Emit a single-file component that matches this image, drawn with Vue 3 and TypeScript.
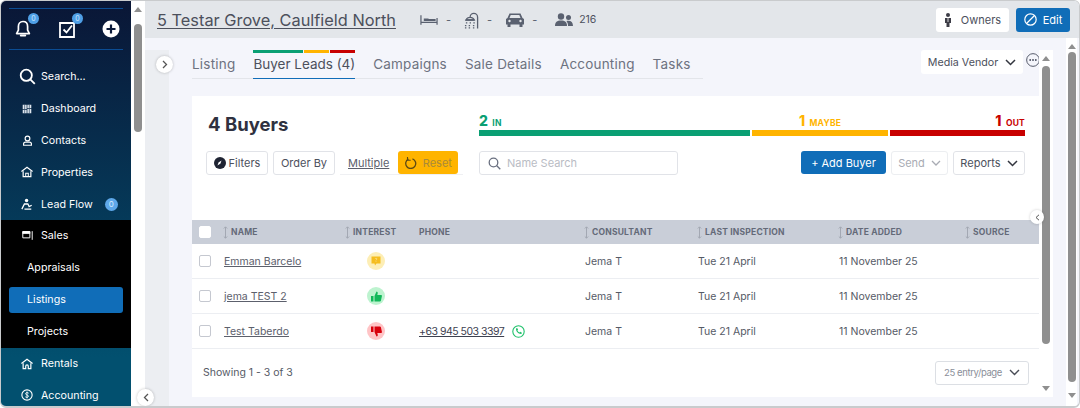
<template>
  <div class="window">
    <aside class="sidebar">
      <div class="quick">
        <span class="quick-icon">
          <svg width="18" height="20" viewBox="0 0 18 20"><path d="M9 2.500c-3 0-4.600 2.200-4.600 5v3.600L2.600 14.600h12.800l-1.800-3.500V7.500c0-2.800-1.600-5-4.600-5z" fill="none" stroke="#fff" stroke-width="1.700" stroke-linejoin="round"/><path d="M6.800 16.500h4.400" stroke="#fff" stroke-width="2" stroke-linecap="round"/></svg>
          <b class="dot">0</b>
        </span>
        <span class="quick-icon">
          <svg width="18" height="20" viewBox="0 0 18 20"><path d="M2 4h14v14H2z" fill="none" stroke="#fff" stroke-width="1.800"/><path d="M5.500 10.500l3 3 5.500-7" fill="none" stroke="#fff" stroke-width="1.800"/></svg>
          <b class="dot">0</b>
        </span>
        <svg width="18" height="18" viewBox="0 0 18 18"><circle cx="9" cy="9" r="8.500" fill="#fff"/><path d="M9 4.500v9M4.500 9h9" stroke="#0b1a3a" stroke-width="2.200"/></svg>
      </div>
      <nav class="nav">
        <a v-for="item in topNav" :key="item.label" class="nav-row">
          <span class="nav-icon" v-html="item.icon"></span>
          <span>{{ item.label }}</span>
          <b v-if="item.badge !== undefined" class="nav-badge">{{ item.badge }}</b>
        </a>
        <div class="sales">
          <a class="nav-row">
            <span class="nav-icon" v-html="salesIcon"></span>
            <span>Sales</span>
          </a>
          <a v-for="sub in salesNav" :key="sub" class="sub-row" :class="{ active: sub === 'Listings' }">{{ sub }}</a>
        </div>
        <a v-for="item in bottomNav" :key="item.label" class="nav-row">
          <span class="nav-icon" v-html="item.icon"></span>
          <span>{{ item.label }}</span>
        </a>
      </nav>
    </aside>
    <div class="side-scroll">
      <span class="arrow-up"></span>
      <span class="thumb"></span>
    </div>

    <main class="main">
      <header class="topbar">
        <a class="address">5 Testar Grove, Caulfield North</a>
        <div class="facts">
          <svg width="18" height="12" viewBox="0 0 19 12"><path d="M1 1v10M18 4v7M1 8.500h17" stroke="#5a6170" stroke-width="1.300" fill="none"/><path d="M4 7V4.500h5V7zM9 7V5h7.500v2" fill="#5a6170"/></svg>
          <i>-</i>
          <svg width="15" height="18" viewBox="0 0 16 18"><path d="M14.500 18V6a4 4 0 0 0-8 0M2 9a5 5 0 0 1 9 0z" fill="none" stroke="#5a6170" stroke-width="1.400"/><path d="M2 9h9" stroke="#5a6170" stroke-width="1.400"/><path d="M2 12h1.500M6 12h1.500M10 12h1.500M1 15h1.500M5 15h1.500M9.500 15H11M1 17.500h1.500M5 17.500h1.500M9.500 17.500H11" stroke="#5a6170" stroke-width="1.300"/></svg>
          <i>-</i>
          <svg class="car" width="18" height="15" viewBox="0 0 18 15"><path d="M3.500 1.500h11L16.500 6l1.500 1v5.500h-1.500V15h-3v-2.500h-9V15h-3v-2.500H0V7l1.500-1z" fill="#5a6170"/><path d="M4.700 3h8.600l1.200 3h-11z" fill="#e3e6ea"/><circle cx="3.500" cy="9" r="1.200" fill="#e3e6ea"/><circle cx="14.500" cy="9" r="1.200" fill="#e3e6ea"/></svg>
          <i>-</i>
          <svg class="people" width="18" height="13" viewBox="0 0 18 13"><circle cx="6" cy="3.500" r="3.200" fill="#5a6170"/><circle cx="13.500" cy="4.500" r="2.500" fill="#5a6170"/><path d="M0 13c0-4 2-5.500 6-5.500s6 1.500 6 5.500z" fill="#5a6170"/><path d="M13 13c0-2-.5-3.500-1.500-5 4-.8 6.500.8 6.500 5z" fill="#5a6170"/></svg>
          <span class="count">216</span>
        </div>
        <div class="top-actions">
          <button class="owners">
            <svg width="8" height="14" viewBox="0 0 8 14"><circle cx="4" cy="2" r="2" fill="#3c3c46"/><path d="M1 5h6v5H5.500v4h-3v-4H1z" fill="#3c3c46"/><path d="M4 5v4" stroke="#fff" stroke-width=".8"/></svg>
            Owners
          </button>
          <button class="edit">
            <svg width="13" height="13" viewBox="0 0 13 13"><circle cx="6.500" cy="6.500" r="5.700" fill="none" stroke="#fff" stroke-width="1.200"/><path d="M3 10l7-7" stroke="#fff" stroke-width="1.200"/></svg>
            Edit
          </button>
        </div>
      </header>

      <div class="content">
        <div class="pane">
          <div class="tab-row">
            <div class="tabs">
              <a v-for="tab in tabs" :key="tab" class="tab" :class="{ current: tab === 'Buyer Leads (4)' }">
                <span v-if="tab === 'Buyer Leads (4)'" class="tab-bar"><i class="in"></i><i class="maybe"></i><i class="out"></i></span>
                {{ tab }}
              </a>
            </div>
            <div class="vendor-tools">
              <div class="vendor">Media Vendor <svg class="chev" width="11" height="7" viewBox="0 0 11 7"><path d="M1 1l4.500 4.500L10 1" fill="none" stroke="#33363f" stroke-width="1.500"/></svg></div>
              <svg width="14" height="14" viewBox="0 0 15 15"><circle cx="7.500" cy="7.500" r="6.800" fill="none" stroke="#4a5060" stroke-width="1"/><circle cx="4.500" cy="7.500" r="1" fill="#4a5060"/><circle cx="7.500" cy="7.500" r="1" fill="#4a5060"/><circle cx="10.500" cy="7.500" r="1" fill="#4a5060"/></svg>
            </div>
          </div>

          <section class="card">
            <div class="summary">
              <h1>4 Buyers</h1>
              <div class="meter">
                <div class="seg seg-in"><span class="seg-label"><b>2</b> IN</span><i></i></div>
                <div class="seg seg-maybe"><span class="seg-label"><b>1</b> MAYBE</span><i></i></div>
                <div class="seg seg-out"><span class="seg-label"><b>1</b> OUT</span><i></i></div>
              </div>
            </div>

            <div class="controls">
              <div class="left-controls">
                <button class="btn filters">
                  <svg width="12" height="12" viewBox="0 0 12 12"><circle cx="6" cy="6" r="6" fill="#1f2433"/><path d="M3.500 8.500l1-3 3-2-1 3z" fill="#fff"/></svg>
                  Filters
                </button>
                <button class="btn order">Order By</button>
                <div class="multi">
                  <a>Multiple</a>
                  <button class="reset">
                    <svg width="12" height="13" viewBox="0 0 12 13"><path d="M7.500 2.800A5 5 0 1 1 3.500 3" fill="none" stroke="#5c4a14" stroke-width="1.300"/><path d="M2.500 1v3.200h3.200" fill="none" stroke="#5c4a14" stroke-width="1.100"/></svg>
                    Reset
                  </button>
                </div>
              </div>
              <div class="search-box">
                <svg width="13" height="13" viewBox="0 0 13 13"><circle cx="5.500" cy="5.500" r="4.300" fill="none" stroke="#6a7080" stroke-width="1.300"/><path d="M8.800 8.800l3.500 3.500" stroke="#6a7080" stroke-width="1.300"/></svg>
                <span>Name Search</span>
              </div>
              <div class="right-controls">
                <button class="add">+ Add Buyer</button>
                <button class="btn send">Send <svg width="10" height="6" viewBox="0 0 10 6"><path d="M1 1l4 4 4-4" fill="none" stroke="#a8abb3" stroke-width="1.300"/></svg></button>
                <button class="btn reports">Reports <svg class="chev" width="11" height="7" viewBox="0 0 11 7"><path d="M1 1l4.500 4.500L10 1" fill="none" stroke="#33363f" stroke-width="1.500"/></svg></button>
              </div>
            </div>

            <div class="grid-wrap">
              <span class="grid-handle"><svg width="5" height="7" viewBox="0 0 5 7"><path d="M4 .8L1 3.500 4 6.200" fill="none" stroke="#555" stroke-width="1"/></svg></span>
              <div class="grid head">
                <span class="cell-check"><i class="box head-box"></i></span>
                <span v-for="col in columns" :key="col.label" class="head-cell" :class="{ nosort: !col.sort }">
                  <svg v-if="col.sort" width="5" height="13" viewBox="0 0 5 13"><path d="M2.500 1v11M.8 2.500L2.500 .8 4.200 2.500M.8 10.500l1.700 1.700 1.700-1.700" stroke="#a3a8b3" stroke-width="1" fill="none"/></svg>
                  {{ col.label }}
                </span>
              </div>
              <div v-for="row in buyers" :key="row.name" class="grid row">
                <span class="cell-check"><i class="box"></i></span>
                <a class="link">{{ row.name }}</a>
                <span class="interest" :class="row.interest" v-html="interestIcons[row.interest]"></span>
                <span class="phone">
                  <a v-if="row.phone" class="link phone-link">{{ row.phone }}</a>
                  <svg v-if="row.phone" width="13" height="13" viewBox="0 0 13 13"><circle cx="6.500" cy="6.500" r="5.700" fill="none" stroke="#1fc16b" stroke-width="1.100"/><path d="M4 3.500l1.200-.5.900 1.700-.7.700c.4.900 1.200 1.700 2.100 2.100l.7-.7 1.700.9-.5 1.200c-2.800.3-5.700-2.600-5.400-5.400z" fill="#1fc16b"/></svg>
                </span>
                <span>{{ row.consultant }}</span>
                <span>{{ row.inspection }}</span>
                <span>{{ row.added }}</span>
                <span></span>
              </div>
            </div>

            <div class="foot">
              <span>Showing 1 - 3 of 3</span>
              <div class="per-page">25 entry/page <svg class="chev" width="11" height="7" viewBox="0 0 11 7"><path d="M1 1l4.500 4.500L10 1" fill="none" stroke="#4a4d57" stroke-width="1.400"/></svg></div>
            </div>
          </section>
        </div>

        <div class="inner-scroll">
          <span class="arrow-up"></span>
          <span class="thumb"></span>
          <span class="arrow-down"></span>
        </div>
        <div class="outer-scroll">
          <span class="arrow-up"></span>
          <span class="thumb"></span>
          <span class="arrow-down"></span>
        </div>

        <span class="float-btn expand"><svg width="6" height="9" viewBox="0 0 6 9"><path d="M1 1l3.500 3.500L1 8" fill="none" stroke="#555" stroke-width="1.300"/></svg></span>
        <span class="float-btn collapse"><svg width="6" height="9" viewBox="0 0 6 9"><path d="M5 1L1.500 4.500 5 8" fill="none" stroke="#555" stroke-width="1.300"/></svg></span>
      </div>
    </main>
  </div>
</template>

<script setup lang="ts">
interface NavItem {
  label: string;
  icon: string;
  badge?: number;
}

interface Buyer {
  name: string;
  interest: "maybe" | "in" | "out";
  phone: string;
  consultant: string;
  inspection: string;
  added: string;
}

const svg = (w: number, body: string) =>
  `<svg width="${w}" height="${w}" viewBox="0 0 14 14" fill="none" stroke="#fff">${body}</svg>`;

const topNav: NavItem[] = [
  { label: "Search...", icon: svg(17, '<circle cx="6" cy="6" r="4.600" stroke-width="1.500"/><path d="M9.500 9.500L13 13" stroke-width="1.500"/>') },
  { label: "Dashboard", icon: svg(10, '<path d="M1 1h5.500v6.500H1zM7.500 1H13v4.500H7.500zM1 8.500h5.500V13H1zM7.500 6.500H13V13H7.500z" fill="#dfe6ee" stroke="none"/><path d="M3.700 1v6.500M10.300 1v4.500M3.700 8.500V13M10.300 6.500V13" stroke="#0b2a4a" stroke-width=".8"/>') },
  { label: "Contacts", icon: svg(11, '<circle cx="7" cy="4.500" r="3" stroke-width="1.500"/><path d="M2 13v-1.500c0-1.500 1-2.500 2.500-2.500h5c1.500 0 2.500 1 2.500 2.500V13z" stroke-width="1.500"/>') },
  { label: "Properties", icon: svg(12, '<path d="M.5 6.500L7 1.500l6.500 5" stroke-width="1.400"/><path d="M2.500 6v6.500h9V6" stroke-width="1.400"/><path d="M5.500 12.500V8.500h3v4" stroke-width="1.200"/>') },
  { label: "Lead Flow", badge: 0, icon: svg(12, '<circle cx="6.500" cy="3" r="2" fill="#fff" stroke="none"/><path d="M1 13l3-6h4l1.500 3 3-1.500M4 13h8" stroke-width="1.500"/>') },
];

const salesIcon = svg(11, '<path d="M1 2h9v8H1z" stroke-width="1.200"/><path d="M1 2h9v2.500H1z" fill="#fff"/><path d="M13 1.500v11" stroke-width="1.200"/>');

const salesNav = ["Appraisals", "Listings", "Projects"];

const bottomNav: NavItem[] = [
  { label: "Rentals", icon: svg(12, '<path d="M.5 6.500L7 1.500l6.500 5" stroke-width="1.400"/><path d="M2.500 6v6.500h3v-3a1.500 1.500 0 0 1 3 0v3h3V6" stroke-width="1.400"/>') },
  { label: "Accounting", icon: svg(12, '<circle cx="7" cy="7" r="6" stroke-width="1.300"/><path d="M9 5c-.5-1-3.500-1.200-3.700.4C5.100 7.300 9 6.700 8.800 8.600 8.600 10 5.500 10 5 9M7 3v8" stroke-width="1"/>') },
];

const tabs = ["Listing", "Buyer Leads (4)", "Campaigns", "Sale Details", "Accounting", "Tasks"];

const columns = [
  { label: "NAME", sort: true },
  { label: "INTEREST", sort: true },
  { label: "PHONE", sort: false },
  { label: "CONSULTANT", sort: true },
  { label: "LAST INSPECTION", sort: true },
  { label: "DATE ADDED", sort: true },
  { label: "SOURCE", sort: true },
];

const buyers: Buyer[] = [
  { name: "Emman Barcelo", interest: "maybe", phone: "", consultant: "Jema T", inspection: "Tue 21 April", added: "11 November 25" },
  { name: "jema TEST 2", interest: "in", phone: "", consultant: "Jema T", inspection: "Tue 21 April", added: "11 November 25" },
  { name: "Test Taberdo", interest: "out", phone: "+63 945 503 3397", consultant: "Jema T", inspection: "Tue 21 April", added: "11 November 25" },
];

const interestIcons: Record<Buyer["interest"], string> = {
  maybe: '<svg width="10" height="10" viewBox="0 0 10 10"><path d="M.5 .5h9v7H5.500L4 9.500 3.500 7.500h-3z" fill="#f5bd1f"/><path d="M4.200 2.800c.3-.8 1.700-.7 1.700.2 0 .7-.9.700-.9 1.400M5 5.300v.7" stroke="#fdeeb5" stroke-width=".6" fill="none"/></svg>',
  in: '<svg width="11" height="11" viewBox="0 0 11 11"><path d="M0 5h2.500v5.500H0zM3.500 5l2-4.500c1 0 1.500 1 1.200 2L6.300 4H10c.8 0 1 .7.900 1.300l-1 4.400c-.1.500-.5.800-1 .8H3.500z" fill="#12b85a"/></svg>',
  out: '<svg width="11" height="11" viewBox="0 0 11 11"><path d="M0 .5h2.500V6H0zM3.500 6l2 4.500c1 0 1.500-1 1.200-2L6.300 7H10c.8 0 1-.7.900-1.300l-1-4.400C9.800.8 9.400.5 8.900.5H3.500z" fill="#d8000c"/></svg>',
};
</script>

<style>
html,
body {
  margin: 0;
  background: #fff;
}
</style>

<style scoped>
.window {
  box-sizing: border-box;
  width: 1080px;
  height: 408px;
  display: flex;
  overflow: hidden;
  position: relative;
  border: 1px solid #c9cbcd;
  border-bottom-width: 2px;
  border-radius: 6px;
  font-family: Inter, "Open Sans", sans-serif;
  color: #3d4150;
  background: #f4f5fb;
}

a {
  cursor: pointer;
}

button {
  font-family: inherit;
  cursor: pointer;
}

.sidebar {
  width: 130px;
  flex: none;
  background: linear-gradient(180deg, #0a1636 0%, #02506f 88%);
  color: #fff;
  font-size: 10.700px;
  padding-top: 7px;
  box-sizing: border-box;
}

.quick {
  margin: 0 8px;
  height: 40px;
  border-top: 1px solid #0b4c93;
  border-bottom: 1px solid #0b4c93;
  display: flex;
  align-items: center;
  justify-content: space-between;
  padding: 0 3px 0 5px;
}

.quick-icon {
  position: relative;
  display: flex;
}

.dot {
  position: absolute;
  top: -6px;
  right: -7px;
  width: 11px;
  height: 11px;
  border-radius: 50%;
  background: #4f9fe6;
  color: #cfe6fa;
  font-size: 7px;
  font-weight: 400;
  line-height: 11px;
  text-align: center;
}

.nav {
  margin-top: 11px;
}

.nav-row {
  height: 31.800px;
  display: flex;
  align-items: center;
  padding-left: 12px;
  position: relative;
}

.nav-icon {
  width: 28px;
  display: flex;
  justify-content: center;
}

.nav-badge {
  width: 13px;
  height: 13px;
  line-height: 13px;
  border-radius: 50%;
  background: #5ea8ea;
  color: #d9ecfc;
  font-size: 8px;
  font-weight: 400;
  text-align: center;
  margin-left: 12px;
}

.sales {
  background: #000;
  display: flex;
  flex-direction: column;
}

.sub-row {
  display: flex;
  align-items: center;
  height: 26px;
  margin: 3px 8px;
  padding-left: 18px;
  border-radius: 3px;
}

.sub-row.active {
  background: #106db8;
}

.side-scroll {
  width: 14px;
  flex: none;
  background: #fff;
  display: flex;
  flex-direction: column;
  align-items: center;
  padding-top: 6px;
  box-sizing: border-box;
}

.arrow-up,
.arrow-down {
  width: 0;
  height: 0;
  border-left: 4px solid transparent;
  border-right: 4px solid transparent;
  flex: none;
}

.arrow-up {
  border-bottom: 5px solid #8f8f8f;
}

.arrow-down {
  border-top: 5px solid #8f8f8f;
}

.thumb {
  display: block;
  width: 8px;
  border-radius: 4px;
  background: #8f8f8f;
}

.side-scroll .thumb {
  height: 108px;
  margin-top: 12px;
}

.main {
  flex: 1;
  min-width: 0;
  display: flex;
  flex-direction: column;
}

.topbar {
  height: 37px;
  flex: none;
  background: #e3e6ea;
  display: flex;
  align-items: center;
  padding-left: 12px;
  padding-right: 9px;
}

.address {
  font-size: 16.350px;
  color: #4c505c;
  text-decoration: underline;
  text-underline-offset: 2px;
  text-decoration-thickness: 1px;
  width: 239px;
  white-space: nowrap;
}

.facts {
  display: flex;
  align-items: center;
  margin-left: 24px;
  font-size: 11px;
  color: #5a6170;
}

.facts i {
  font-style: normal;
  margin: 0 13px 0 8px;
}

.car {
  margin-left: 1px;
}

.people {
  margin-left: 5px;
  margin-right: 6px;
}

.count {
  color: #4c505c;
  font-size: 10.500px;
}

.top-actions {
  margin-left: auto;
  display: flex;
  gap: 7px;
}

.owners,
.edit {
  height: 24px;
  border: none;
  border-radius: 3px;
  display: flex;
  align-items: center;
  font-size: 11px;
  padding: 0;
  justify-content: center;
}

.owners {
  width: 73px;
  background: #fff;
  color: #4c505c;
  gap: 9px;
}

.edit {
  width: 54px;
  background: #106db8;
  color: #fff;
  gap: 6px;
}

.content {
  flex: 1;
  min-height: 0;
  display: flex;
  position: relative;
}

.pane {
  width: 895px;
  flex: none;
  padding-left: 47px;
  box-sizing: border-box;
  background: linear-gradient(90deg, #eceef2 0, #eceef2 24px, #f4f5fb 24px);
  margin-top: 12px;
  position: relative;
}

.tab-row {
  height: 46px;
  display: flex;
  justify-content: space-between;
  width: 848px;
}

.tabs {
  display: flex;
  align-items: flex-start;
  width: 511px;
  height: 28px;
  border-bottom: 1px solid #e3e5ea;
  gap: 18px;
  box-sizing: content-box;
  font-size: 13.500px;
  letter-spacing: 0.2px;
  color: #6d7280;
}

.tab {
  position: relative;
  height: 28px;
  line-height: 29px;
  white-space: nowrap;
  box-sizing: border-box;
}

.tab.current {
  color: #4c505c;
  letter-spacing: 0;
  border-bottom: 1px solid #106db8;
  margin-bottom: -1px;
  height: 29px;
}

.tab-bar {
  position: absolute;
  left: 0;
  right: 0;
  top: 0;
  height: 3px;
  display: flex;
  gap: 1px;
}

.tab-bar i {
  display: block;
}

.tab-bar .in {
  flex: 50;
  background: #0a9f73;
}

.tab-bar .maybe {
  flex: 25;
  background: #ffb400;
}

.tab-bar .out {
  flex: 25;
  background: #c80000;
}

.vendor-tools {
  display: flex;
  align-items: flex-start;
  gap: 3px;
}

.vendor-tools > svg {
  margin-top: 3px;
}

.vendor {
  width: 102px;
  height: 24px;
  background: #fff;
  border-radius: 3px;
  font-size: 10.700px;
  color: #4c505c;
  display: flex;
  align-items: center;
  justify-content: center;
  gap: 7px;
  white-space: nowrap;
}

.card {
  width: 848px;
  height: 301px;
  background: #fff;
  display: flex;
  flex-direction: column;
}

.summary {
  display: flex;
  align-items: flex-start;
  padding: 17px 15px 0 16px;
  height: 55px;
  box-sizing: border-box;
}

h1 {
  margin: 0;
  width: 271px;
  font-size: 18.500px;
  line-height: 22px;
  font-weight: 700;
  color: #2f3140;
}

.meter {
  display: grid;
  grid-template-columns: 271px 136px 135px;
  column-gap: 2px;
  flex: 1;
}

.seg {
  display: flex;
  flex-direction: column;
}

.seg i {
  display: block;
  height: 6px;
  margin-top: 2px;
}

.seg-label {
  display: block;
  height: 15px;
  font-size: 8.500px;
  font-weight: 700;
  line-height: 15px;
  letter-spacing: 0.2px;
  word-spacing: 2px;
  white-space: nowrap;
}

.seg-label b {
  font-size: 14px;
  font-weight: 800;
}

.seg-in .seg-label {
  color: #0a9f73;
}

.seg-in i {
  background: #0a9f73;
}

.seg-maybe .seg-label {
  color: #ffb400;
  text-align: center;
}

.seg-maybe i {
  background: #ffb400;
}

.seg-out .seg-label {
  color: #c80000;
  text-align: right;
}

.seg-out i {
  background: #c80000;
}

.controls {
  display: flex;
  align-items: flex-start;
  padding: 0 15px 0 14px;
  height: 69px;
  box-sizing: border-box;
}

.left-controls {
  display: flex;
  width: 273px;
  flex: none;
  gap: 5px;
}

.btn {
  height: 24px;
  background: #fff;
  border: 1px solid #e1e3e8;
  border-radius: 3px;
  font-size: 11px;
  color: #4c505c;
  display: flex;
  align-items: center;
  justify-content: center;
  padding: 0;
  white-space: nowrap;
}

.filters {
  width: 62px;
  gap: 3px;
}

.order {
  width: 62px;
}

.multi {
  display: flex;
  align-items: center;
  height: 24px;
  padding-left: 8px;
  padding-right: 5px;
  gap: 9px;
  border-bottom: 1px solid #eff0f3;
  font-size: 11px;
  box-sizing: border-box;
}

.multi a {
  text-decoration: underline;
  color: #5c606c;
}

.reset {
  width: 60px;
  height: 23px;
  border: none;
  border-radius: 3px;
  background: #ffb400;
  color: #a98a3a;
  font-size: 11px;
  display: flex;
  align-items: center;
  justify-content: center;
  gap: 6px;
  padding: 0;
}

.search-box {
  width: 199px;
  height: 24px;
  border: 1px solid #e1e3e8;
  border-radius: 3px;
  box-sizing: border-box;
  display: flex;
  align-items: center;
  padding-left: 8px;
  gap: 6px;
  font-size: 11px;
  color: #b9bcc4;
}

.right-controls {
  margin-left: auto;
  display: flex;
  gap: 5px;
}

.add {
  width: 85px;
  height: 23px;
  border: none;
  border-radius: 3px;
  background: #106db8;
  color: #fff;
  font-size: 11px;
  padding: 0;
  white-space: nowrap;
}

.send {
  width: 57px;
  color: #a8abb3;
  border-color: #eceef1;
  gap: 6px;
}

.reports {
  width: 72px;
  gap: 6px;
}

.grid-wrap {
  position: relative;
}

.grid-handle {
  position: absolute;
  right: -4px;
  top: -10px;
  width: 14px;
  height: 14px;
  border-radius: 50%;
  background: #fff;
  box-shadow: 0 0 3px rgba(0, 0, 0, 0.2);
  display: flex;
  align-items: center;
  justify-content: center;
  z-index: 1;
}

.grid {
  display: grid;
  grid-template-columns: 32px 122px 73px 166px 113px 141px 127px 74px;
  align-items: center;
}

.head {
  height: 24px;
  background: #c9ced8;
  font-size: 8.500px;
  font-weight: 700;
  letter-spacing: 0.2px;
  color: #646a78;
}

.head-cell {
  display: flex;
  align-items: center;
  gap: 3px;
  white-space: nowrap;
  margin-left: -1px;
}

.head-cell.nosort {
  margin-left: 0;
}

.cell-check {
  display: flex;
  padding-left: 7px;
}

.box {
  display: block;
  width: 12px;
  height: 12px;
  box-sizing: border-box;
  border: 1px solid #c5c8d0;
  border-radius: 2px;
  background: #fff;
}

.head-box {
  border-color: #fff;
}

.row {
  height: 35px;
  border-bottom: 1px solid #eceef2;
  box-sizing: border-box;
  font-size: 10.500px;
  color: #555a66;
}

.link {
  text-decoration: underline;
  color: #5c606c;
}

.interest {
  width: 18px;
  height: 18px;
  border-radius: 50%;
  margin-left: 21px;
  display: flex;
  align-items: center;
  justify-content: center;
}

.interest.maybe {
  background: #fdeeb5;
}

.interest.in {
  background: #bdf3cf;
}

.interest.out {
  background: #ffc4c6;
}

.phone {
  display: flex;
  align-items: center;
  gap: 8px;
  white-space: nowrap;
}

.phone-link {
  color: #3d4150;
  letter-spacing: -0.5px;
}

.foot {
  flex: 1;
  display: flex;
  align-items: center;
  justify-content: space-between;
  font-size: 10.500px;
  color: #555a66;
  padding: 0 11px 0 11px;
  margin-top: -1px;
}

.per-page {
  width: 94px;
  height: 24px;
  border: 1px solid #dcdfe4;
  border-radius: 3px;
  box-sizing: border-box;
  color: #8a8e99;
  display: flex;
  align-items: center;
  justify-content: center;
  gap: 7px;
  white-space: nowrap;
  font-size: 9.500px;
  letter-spacing: -0.4px;
}

.inner-scroll {
  width: 14px;
  flex: none;
  margin-top: 12px;
  margin-bottom: 9px;
  background: #fff;
  display: flex;
  flex-direction: column;
  align-items: center;
  padding-top: 6px;
  box-sizing: border-box;
  position: relative;
  left: -1px;
}

.inner-scroll .thumb {
  height: 278px;
  margin-top: 5px;
}

.inner-scroll .arrow-down {
  margin-top: auto;
  margin-bottom: 6px;
}

.outer-scroll {
  width: 11px;
  flex: none;
  margin-left: 12px;
  background: #fff;
  display: flex;
  flex-direction: column;
  align-items: center;
  padding: 6px 0 8px;
  box-sizing: border-box;
}

.outer-scroll .thumb {
  height: 330px;
  margin-top: 3px;
}

.outer-scroll .arrow-down {
  margin-top: auto;
}

.float-btn {
  position: absolute;
  width: 17px;
  height: 17px;
  border-radius: 50%;
  background: #fff;
  box-shadow: 0 0 3px rgba(0, 0, 0, 0.25);
  display: flex;
  align-items: center;
  justify-content: center;
}

.expand {
  left: 11px;
  top: 18px;
}

.collapse {
  left: -8px;
  bottom: 0;
}
</style>
